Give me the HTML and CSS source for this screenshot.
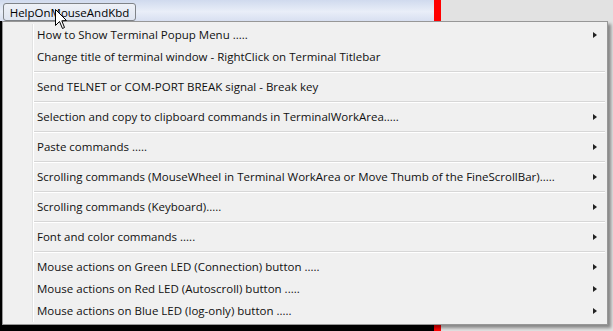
FILE: index.html
```html
<!DOCTYPE html>
<html lang="en">
<head>
    <meta charset="UTF-8">
    <title>HelpOnMouseAndKbd</title>
    <link rel="stylesheet" href="styles.css">
</head>
<body>
    <div class="screen">
        <div class="terminal">
            <div class="titlebar">
                <button class="help-button">HelpOnMouseAndKbd</button>
            </div>
            <div class="work-area"></div>
        </div>
        <div class="scroll-led"></div>
        <div class="desktop"></div>
    </div>

    <div class="menu">
        <div class="menu-item">How to Show Terminal Popup Menu .....<span class="arrow"></span></div>
        <div class="menu-item">Change title of terminal window - RightClick on Terminal Titlebar</div>
        <div class="separator"></div>
        <div class="menu-item">Send TELNET or COM-PORT BREAK signal - Break key</div>
        <div class="separator"></div>
        <div class="menu-item">Selection and copy to clipboard commands in TerminalWorkArea.....<span class="arrow"></span></div>
        <div class="separator"></div>
        <div class="menu-item">Paste commands .....<span class="arrow"></span></div>
        <div class="separator"></div>
        <div class="menu-item">Scrolling commands (MouseWheel in Terminal WorkArea or Move Thumb of the FineScrollBar).....<span class="arrow"></span></div>
        <div class="separator"></div>
        <div class="menu-item">Scrolling commands (Keyboard).....<span class="arrow"></span></div>
        <div class="separator"></div>
        <div class="menu-item">Font and color commands .....<span class="arrow"></span></div>
        <div class="separator"></div>
        <div class="menu-item">Mouse actions on Green LED (Connection) button .....<span class="arrow"></span></div>
        <div class="menu-item">Mouse actions on Red LED (Autoscroll) button .....<span class="arrow"></span></div>
        <div class="menu-item">Mouse actions on Blue LED (log-only) button .....<span class="arrow"></span></div>
    </div>

    <svg class="cursor" width="13" height="21" viewBox="0 0 13 21">
        <path d="M0.5 0.5 L0.5 16.5 L4.5 12.5 L7.5 19.5 L9.5 18.5 L6.8 11.8 L11.5 11.5 Z" fill="#fff" stroke="#000" stroke-width="1"/>
    </svg>
</body>
</html>
```

FILE: styles.css
```css
body {
    margin: 0;
    padding: 0;
    font-family: "Open Sans", "Noto Sans", sans-serif;
    font-size: 11.5px;
    overflow: hidden;
}
.screen {
    display: flex;
    width: 613px;
    height: 331px;
}
.terminal {
    width: 434px;
    display: flex;
    flex-direction: column;
}
.titlebar {
    height: 21px;
    box-sizing: border-box;
    padding: 3px 0 0 3px;
    background: linear-gradient(#d0daee, #e9eef8 55%, #d8e0f1);
}
.help-button {
    width: 133px;
    height: 18px;
    padding: 0;
    border: 1px solid #7f8388;
    border-radius: 3px;
    background: linear-gradient(#eef1f7, #dfe5f1);
    font-family: inherit;
    font-size: 11.5px;
    color: #000;
    line-height: 15px;
}
.work-area {
    flex: 1;
    background-color: #000;
}
.scroll-led {
    width: 7px;
    background-color: #ff0000;
}
.desktop {
    flex: 1;
    background-color: #e2e2e2;
}
.menu {
    position: absolute;
    left: 2px;
    top: 21px;
    width: 606px;
    box-sizing: border-box;
    padding: 2px;
    background-color: #f0f0f0;
    border: 1px solid #979797;
    box-shadow: 3px 3px 3px rgba(0, 0, 0, 0.4);
}
.menu::before {
    content: "";
    position: absolute;
    left: 29px;
    top: 2px;
    bottom: 2px;
    width: 1px;
    background-color: #e2e3e3;
    border-right: 1px solid #ffffff;
}
.menu-item {
    position: relative;
    height: 22px;
    line-height: 22px;
    padding: 0 8px 0 32px;
    color: #111;
    white-space: nowrap;
}
.arrow {
    position: absolute;
    right: 8px;
    top: 8px;
    width: 0;
    height: 0;
    border-top: 3.5px solid transparent;
    border-bottom: 3.5px solid transparent;
    border-left: 4px solid #222;
}
.separator {
    height: 1px;
    margin: 3px 0 3px 28px;
    background-color: #d7d7d7;
    border-bottom: 1px solid #ffffff;
}
.cursor {
    position: absolute;
    left: 55px;
    top: 9px;
}
```
